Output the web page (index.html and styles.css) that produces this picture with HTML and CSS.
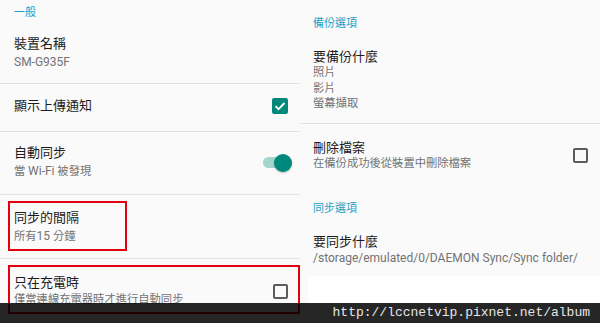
FILE: index.html
```html
<!DOCTYPE html>
<html lang="zh-Hant">
<head>
    <meta charset="UTF-8">
    <meta name="viewport" content="width=device-width, initial-scale=1.0">
    <title>DAEMON Sync 設定</title>
    <link rel="stylesheet" href="styles.css">
</head>
<body>
    <div class="screen">
        <!-- General settings -->
        <div class="panel panel-left">
            <div class="category">一般</div>
            <div class="pref pref-device">
                <div class="pref-text">
                    <div class="title">裝置名稱</div>
                    <div class="summary latin">SM-G935F</div>
                </div>
            </div>
            <div class="pref pref-notify">
                <div class="pref-text">
                    <div class="title">顯示上傳通知</div>
                </div>
                <span class="checkbox checked">
                    <svg viewBox="0 0 16 16" width="16" height="16"><path d="M3.5 8.2l3 3 6-6.2" fill="none" stroke="#fff" stroke-width="1.8"/></svg>
                </span>
            </div>
            <div class="pref pref-autosync">
                <div class="pref-text">
                    <div class="title">自動同步</div>
                    <div class="summary">當 <span class="latin">Wi-Fi</span> 被發現</div>
                </div>
                <span class="switch">
                    <span class="switch-track"></span>
                    <span class="switch-thumb"></span>
                </span>
            </div>
            <div class="pref pref-interval">
                <div class="marked marked-small">
                    <div class="title">同步的間隔</div>
                    <div class="summary">所有<span class="latin">15</span> 分鐘</div>
                </div>
            </div>
            <div class="pref pref-charging">
                <div class="marked marked-wide">
                    <div class="pref-text">
                        <div class="title">只在充電時</div>
                        <div class="summary">僅當連線充電器時才進行自動同步</div>
                    </div>
                    <span class="checkbox"></span>
                </div>
            </div>
        </div>

        <!-- Backup / sync settings -->
        <div class="panel panel-right">
            <div class="category">備份選項</div>
            <div class="pref pref-what">
                <div class="pref-text">
                    <div class="title">要備份什麼</div>
                    <div class="summary">照片</div>
                    <div class="summary">影片</div>
                    <div class="summary">螢幕擷取</div>
                </div>
            </div>
            <div class="pref pref-delete">
                <div class="pref-text">
                    <div class="title">刪除檔案</div>
                    <div class="summary">在備份成功後從裝置中刪除檔案</div>
                </div>
                <span class="checkbox"></span>
            </div>
            <div class="category category-sync">同步選項</div>
            <div class="pref pref-folder">
                <div class="pref-text">
                    <div class="title">要同步什麼</div>
                    <div class="summary latin">/storage/emulated/0/DAEMON Sync/Sync folder/</div>
                </div>
            </div>
            <div class="blank"></div>
        </div>
    </div>
    <div class="watermark">http://lccnetvip.pixnet.net/album</div>
</body>
</html>
```

FILE: styles.css
```css
* {
    margin: 0;
    padding: 0;
    box-sizing: border-box;
}
body {
    font-family: Roboto, "Noto Sans CJK TC", sans-serif;
    background: #fafafa;
    width: 600px;
    height: 323px;
    overflow: hidden;
    position: relative;
}
.screen {
    display: flex;
    height: 323px;
}
.panel {
    width: 300px;
    display: flex;
    flex-direction: column;
}
.category {
    color: #1ba1c5;
    font-size: 11px;
    line-height: 16px;
}
.panel-left .category {
    height: 21px;
    padding: 5px 0 0 14px;
}
.panel-right .category {
    padding: 16px 0 0 13px;
}
.panel-right .category-sync {
    padding-top: 14px;
}
.pref {
    display: flex;
    align-items: center;
    justify-content: space-between;
}
.pref-text {
    flex: 1;
}
.title {
    color: #1c1c1c;
    font-size: 13px;
    line-height: 18px;
}
.summary {
    color: #737373;
    font-size: 11.3px;
    line-height: 18px;
    white-space: nowrap;
}
.latin {
    font-size: 12px;
}

/* left column rows */
.panel-left .pref {
    border-bottom: 1px solid #e3e3e3;
    padding-left: 14px;
    padding-right: 12px;
}
.pref-device {
    padding-top: 14px;
    padding-bottom: 12px;
}
.pref-notify {
    padding-top: 13px;
    padding-bottom: 16px;
}
.panel-left .pref-autosync {
    padding: 12px 8px 13px 14px;
}
.panel-left .pref-interval {
    padding: 6px 0 7px 8px;
}
.panel-left .pref-charging {
    border-bottom: none;
    padding: 6px 0 0 8px;
}
.marked {
    border: 2px solid #e2000f;
}
.marked-small {
    width: 119px;
    padding: 6px 4px 3px 4px;
}
.marked-wide {
    flex: 1;
    display: flex;
    align-items: center;
    padding: 7px 10px 4px 4px;
}
.marked-wide .summary {
    line-height: 16px;
}

/* right column rows */
.panel-right .title {
    line-height: 16px;
}
.panel-right .summary {
    line-height: 15.5px;
}
.panel-right .pref {
    padding-left: 13px;
    padding-right: 12px;
}
.pref-what {
    padding-top: 17px;
    padding-bottom: 11px;
    border-bottom: 1px solid #e3e3e3;
}
.pref-delete {
    padding-top: 16px;
    padding-bottom: 15px;
}
.pref-delete .summary,
.pref-folder .summary {
    line-height: 16px;
}
.pref-folder {
    padding-top: 17px;
    padding-bottom: 10px;
}
.blank {
    flex: 1;
    margin-left: 8px;
    background: #fff;
}

/* controls */
.checkbox {
    width: 15px;
    height: 15px;
    border: 2px solid #5c5c5c;
    border-radius: 2px;
    flex-shrink: 0;
}
.checkbox.checked {
    width: 16px;
    height: 16px;
    border: none;
    background: #00897b;
    display: flex;
}
.switch {
    display: flex;
    align-items: center;
}
.switch-track {
    width: 22px;
    height: 11px;
    border-radius: 6px;
    background: #a3d6cf;
}
.switch-thumb {
    width: 18px;
    height: 18px;
    border-radius: 50%;
    margin-left: -11px;
    background: #00897b;
    box-shadow: 0 1px 2px rgba(0, 0, 0, 0.25);
}

/* watermark strip over the screenshot */
.watermark {
    position: absolute;
    left: 0;
    right: 0;
    bottom: 0;
    height: 20px;
    background: rgba(0, 0, 0, 0.85);
    color: #e6e6e6;
    font-family: "Liberation Mono", monospace;
    font-size: 13px;
    line-height: 20px;
    text-align: right;
    padding-right: 10px;
}
```
